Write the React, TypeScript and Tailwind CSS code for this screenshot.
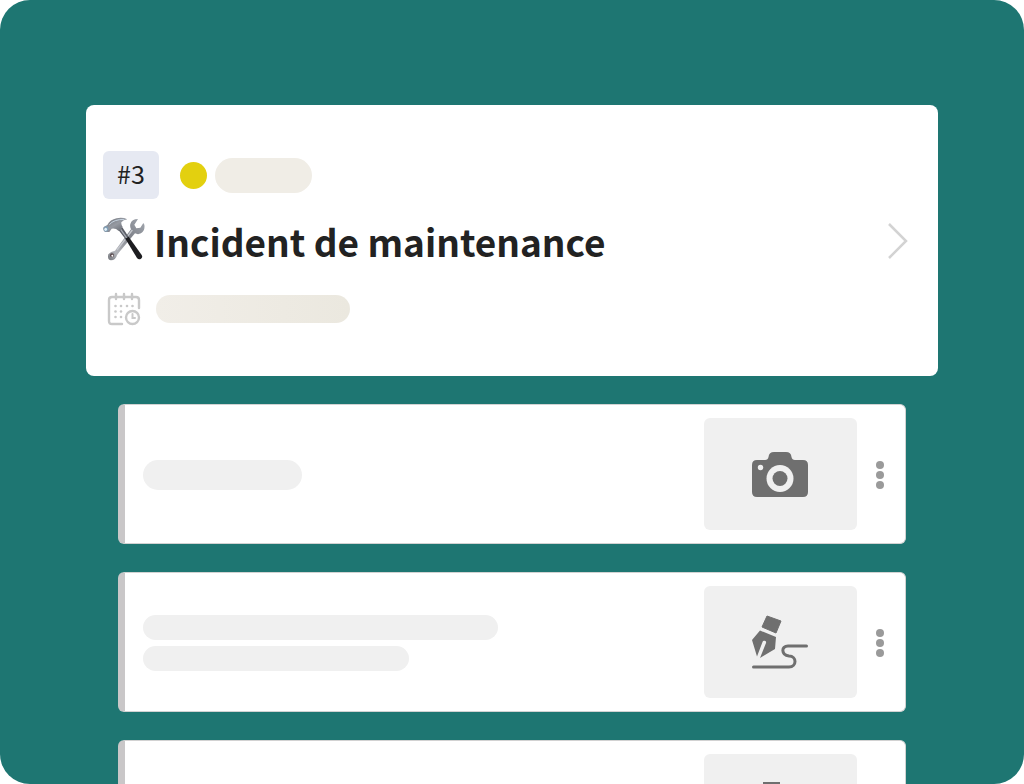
import type { ReactNode } from "react"

function ToolsIcon() {
  return (
    <svg viewBox="24 20 126 132" className="h-11 w-[42px] shrink-0" aria-hidden="true">
      <defs>
        <linearGradient id="steel" x1="0" y1="0" x2="1" y2="1">
          <stop offset="0" stopColor="#6b6e76" />
          <stop offset="0.5" stopColor="#969aa2" />
          <stop offset="1" stopColor="#565961" />
        </linearGradient>
        <linearGradient id="wrench" x1="1" y1="0" x2="0" y2="1">
          <stop offset="0" stopColor="#a3a8b0" />
          <stop offset="0.4" stopColor="#80838b" />
          <stop offset="0.8" stopColor="#b3b5ba" />
          <stop offset="1" stopColor="#707379" />
        </linearGradient>
      </defs>
      {/* Wrench */}
      <path
        d="M129 26 Q110 26 106 41 Q104 49 108 57 L60 121 Q47 123 40 132 Q36 148 48 150 Q62 150 66 135 L73 125 L120 69 Q129 74 138 69 Q151 60 148 43 L145 38 L136 52 L124 54 L118 43 Z"
        fill="url(#wrench)"
      />
      <path d="M112 59 L66 119" stroke="#c5c8ce" strokeWidth="4" />
      <circle cx="51" cy="135" r="6" fill="#5b4c50" />
      <circle cx="52" cy="136" r="3" fill="#fff" />
      {/* Hammer */}
      <path d="M71 60 L82 51 L101 80 L93 88 Z" fill="#5a5d65" />
      <path d="M77 57 L96 84" stroke="#a4a8b0" strokeWidth="4" />
      <path d="M91 85 L101 79 L140 134 Q144 141 138 145 Q131 149 126 143 Z" fill="#1d1d20" />
      <path
        d="M26 50 L37 44 Q45 28 65 24 Q82 20 97 27 Q85 29 79 36 Q78 42 83 50 L71 62 Q62 53 50 55 L43 65 L30 65 Q22 58 26 50 Z"
        fill="url(#steel)"
      />
      <path d="M43 43 Q56 27 88 27" stroke="#c5d2df" strokeWidth="3" fill="none" />
      <ellipse cx="33" cy="56" rx="7" ry="8" fill="#7e9db5" />
      <ellipse cx="32" cy="57" rx="4" ry="5" fill="#e3f0f8" />
    </svg>
  )
}

function CalendarIcon() {
  return (
    <svg viewBox="0 0 34 34" className="h-[34px] w-[34px] shrink-0" fill="none" stroke="#c9c9c9" strokeWidth="2.400" strokeLinecap="round" aria-hidden="true">
      <path d="M15 32 H5 Q2 32 2 29 V8 Q2 5 5 5 H29 Q32 5 32 8 V16" />
      <path d="M9 2 V7 M17 2 V7 M25 2 V7" />
      <g fill="#c9c9c9" stroke="none">
        <circle cx="8.500" cy="14" r="1.300" />
        <circle cx="14" cy="14" r="1.300" />
        <circle cx="20" cy="14" r="1.300" />
        <circle cx="25.500" cy="14" r="1.300" />
        <circle cx="8.500" cy="19.500" r="1.300" />
        <circle cx="14" cy="19.500" r="1.300" />
        <circle cx="8.500" cy="25" r="1.300" />
        <circle cx="14" cy="25" r="1.300" />
      </g>
      <circle cx="25.500" cy="25.500" r="6.500" />
      <path d="M25.500 22 V26 H28" strokeWidth="2" />
    </svg>
  )
}

function CameraIcon() {
  return (
    <svg viewBox="0 0 56 46" className="h-[46px] w-14" fill="#6f6f6f" aria-hidden="true">
      <path d="M5 9 H13 Q16 9 16.500 6 Q17 1 22 1 H34 Q39 1 39.500 6 Q40 9 43 9 H51 Q56 9 56 14 V41 Q56 46 51 46 H5 Q0 46 0 41 V14 Q0 9 5 9 Z" />
      <circle cx="8.500" cy="16.500" r="2.700" fill="#f0f0f0" />
      <circle cx="28" cy="27.500" r="13.500" fill="#f0f0f0" />
      <circle cx="28" cy="27.500" r="7.500" />
    </svg>
  )
}

function SignatureIcon() {
  return (
    <svg viewBox="0 0 56 54" className="h-[54px] w-14" fill="#6f6f6f" aria-hidden="true">
      <path d="M15 1 L29 6 L24 18 L10 12 Z" stroke="#6f6f6f" strokeWidth="1" strokeLinejoin="round" />
      <path d="M8 15.500 L24 22 L23 34 L8 43 L14 28 A1.700 1.700 0 0 0 10.500 27 L5 41.500 L0 25 Z" />
      <path
        d="M1.500 52 H37 C45 52 45 41 37 41 C29 40 29 31 36 31 H54.500"
        fill="none"
        stroke="#6f6f6f"
        strokeWidth="3"
        strokeLinecap="round"
      />
    </svg>
  )
}

function ClipboardIcon() {
  return (
    <svg viewBox="0 0 56 56" className="h-14 w-14" fill="#6f6f6f" aria-hidden="true">
      <path d="M11 0 H28 V6 H40 V56 H4 V6 H11 Z" />
    </svg>
  )
}

const items: { label: string; bars: string[]; icon: ReactNode }[] = [
  { label: "Photo", bars: ["h-[30px] w-[159px]"], icon: <CameraIcon /> },
  { label: "Signature", bars: ["h-[25px] w-[355px]", "h-[25px] w-[266px]"], icon: <SignatureIcon /> },
  { label: "Document", bars: ["h-[30px] w-[159px]"], icon: <ClipboardIcon /> },
]

export default function App() {
  return (
    <main className="h-screen overflow-hidden rounded-[30px] bg-[#1e7672] px-[86px] pt-[105px] font-['Noto_Sans_CJK_SC',sans-serif] text-[#222]">
      <a href="#incident" className="flex items-center justify-between rounded-lg bg-white pt-[46px] pr-[30px] pb-[50px] pl-[17px]">
        <div>
          <div className="flex items-center">
            <span className="flex h-12 w-14 items-center justify-center rounded-md bg-[#e6e9f2] pb-1 text-[25px] leading-8">
              #3
            </span>
            <span className="ml-[21px] h-[27px] w-[27px] rounded-full bg-[#e3d00f]" />
            <span className="ml-2 h-[35px] w-[97px] rounded-full bg-[#f0ede6]" />
          </div>
          <div className="mt-2 flex h-16 items-center gap-[9px]">
            <ToolsIcon />
            <h1 className="pt-1 text-[37px] leading-[56px] font-bold whitespace-nowrap">Incident de maintenance</h1>
          </div>
          <div className="mt-[21px] flex h-[34px] items-center gap-[15px] pl-1">
            <CalendarIcon />
            <span className="h-7 w-[194px] rounded-full bg-linear-to-r from-[#f1eee8] to-[#ebe8df]" />
          </div>
        </div>
        <svg viewBox="0 0 20 40" className="h-10 w-5 shrink-0" fill="none" stroke="#d3d3d3" strokeWidth="2.500" aria-hidden="true">
          <path d="M1 5 L18 22 L1 39" />
        </svg>
      </a>

      <ul className="mx-8 mt-7 flex flex-col gap-7">
        {items.map((item) => (
          <li
            key={item.label}
            className="flex h-[140px] items-center rounded-md border border-l-[7px] border-[#d2d2d2] border-l-[#c9c7c8] bg-white pl-[18px]"
          >
            <div className="flex flex-1 flex-col gap-[6px] pt-[2px]">
              {item.bars.map((bar) => (
                <span key={bar} className={`rounded-full bg-[#f0f0f0] ${bar}`} />
              ))}
            </div>
            <div className="flex h-28 w-[153px] items-center justify-center rounded-md bg-[#f0f0f0] pr-[2px]">{item.icon}</div>
            <button
              type="button"
              aria-label={`Options ${item.label}`}
              className="flex h-12 w-12 flex-col items-center justify-center gap-[2px] pt-[2px] pr-[2px]"
            >
              <span className="h-2 w-2 rounded-full bg-[#9a9a9a]" />
              <span className="h-2 w-2 rounded-full bg-[#9a9a9a]" />
              <span className="h-2 w-2 rounded-full bg-[#9a9a9a]" />
            </button>
          </li>
        ))}
      </ul>
    </main>
  )
}
